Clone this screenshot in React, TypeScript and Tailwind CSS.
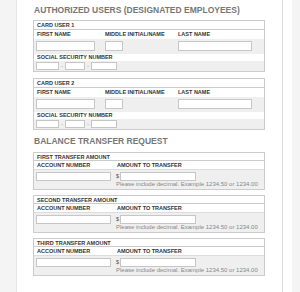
import React from "react";

const font = { fontFamily: '"Liberation Sans", Arial, Helvetica, sans-serif' };

function Input({ w }: { w: string }) {
  return <div className={`h-[10px] bg-white border border-[#c6c6c6] ${w}`} />;
}

function UserCard({ n }: { n: number }) {
  return (
    <div className="border border-[#cccccc] bg-white text-[#333] w-[232px]">
      <div className="h-[9px] px-[3px] text-[5.5px] font-bold leading-[9px] border-b border-[#cccccc]">
        CARD USER {n}
      </div>
      <div className="h-[9px] flex items-center px-[2px] text-[5.5px] font-bold leading-[9px]">
        <div className="w-[69px] pl-[1px]">FIRST NAME</div>
        <div className="w-[73px]">MIDDLE INITIAL/NAME</div>
        <div>LAST NAME</div>
      </div>
      <div className="h-[15px] flex items-start pt-[2px] px-[2px] bg-[#efefef]">
        <div className="w-[69px]">
          <Input w="w-[59px]" />
        </div>
        <div className="w-[73px]">
          <Input w="w-[18px]" />
        </div>
        <Input w="w-[74px]" />
      </div>
      <div className="h-[7px] px-[3px] flex items-center text-[5.5px] font-bold leading-[7px]">
        SOCIAL SECURITY NUMBER
      </div>
      <div className="h-[10px] flex items-start pt-[1px] px-[2px] bg-[#efefef] text-[5px] text-[#888]">
        <div className="h-[8px] w-[23px] bg-white border border-[#c6c6c6]" />
        <div className="w-[6px] text-center leading-[8px]">-</div>
        <div className="h-[8px] w-[20px] bg-white border border-[#c6c6c6]" />
        <div className="w-[6px] text-center leading-[8px]">-</div>
        <div className="h-[8px] w-[26px] bg-white border border-[#c6c6c6]" />
      </div>
    </div>
  );
}

function TransferCard({ title }: { title: string }) {
  return (
    <div className="border border-[#cccccc] bg-white text-[#333] w-[232px]">
      <div className="h-[8px] px-[3px] text-[5.5px] font-bold leading-[8px] border-b border-[#cccccc]">
        {title}
      </div>
      <div className="h-[9px] flex items-center px-[2px] text-[5.5px] font-bold leading-[9px] border-b border-[#dddddd]">
        <div className="w-[81px] pl-[1px]">ACCOUNT NUMBER</div>
        <div>AMOUNT TO TRANSFER</div>
      </div>
      <div className="h-[19px] flex items-start pt-[2px] px-[2px] bg-[#efefef]">
        <div className="w-[80px]">
          <div className="h-[9px] w-[75px] bg-white border border-[#c6c6c6]" />
        </div>
        <div className="flex flex-col">
          <div className="flex items-center">
            <span className="text-[5.5px] text-[#555] w-[4px] leading-[9px]">$</span>
            <div className="h-[9px] w-[76px] bg-white border border-[#c6c6c6]" />
          </div>
          <div className="text-[6px] leading-[7px] text-[#888] whitespace-nowrap">
            Please include decimal. Example 1234.50 or 1234.00
          </div>
        </div>
      </div>
    </div>
  );
}

export default function App() {
  return (
    <div className="w-[300px] h-[292px] flex overflow-hidden bg-[#f4f4f4]" style={font}>
      <div className="w-[17px] shrink-0 bg-[#f4f4f4] border-r border-[#e6e6e6]" />
      <div className="w-[266px] shrink-0 bg-white border-r border-[#dcdcdc] pl-[16px] pt-[5px]">
        <div className="text-[8.5px] font-bold leading-[11px] text-[#777] pl-[1px] mb-[4px]">
          AUTHORIZED USERS (DESIGNATED EMPLOYEES)
        </div>
        <div className="flex flex-col gap-[6px]">
          <UserCard n={1} />
          <UserCard n={2} />
        </div>
        <div className="text-[8.5px] font-bold leading-[11px] text-[#777] pl-[1px] mt-[6px] mb-[5px]">
          BALANCE TRANSFER REQUEST
        </div>
        <div className="flex flex-col gap-[5px]">
          <TransferCard title="FIRST TRANSFER AMOUNT" />
          <TransferCard title="SECOND TRANSFER AMOUNT" />
          <TransferCard title="THIRD TRANSFER AMOUNT" />
        </div>
      </div>
      <div className="w-[9px] shrink-0 bg-white" />
      <div className="flex-1 bg-[#f4f4f4]" />
    </div>
  );
}
